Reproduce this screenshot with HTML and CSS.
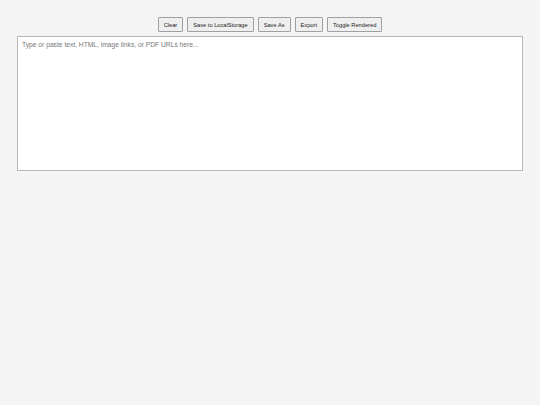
FILE: index.html
```html
<!DOCTYPE html>
<html>
<head>
<meta charset="utf-8">
<link rel="stylesheet" href="styles.css">
</head>
<body>
<div class="toolbar">
  <button class="btn">Clear</button>
  <button class="btn">Save to LocalStorage</button>
  <button class="btn">Save As</button>
  <button class="btn">Export</button>
  <button class="btn">Toggle Rendered</button>
</div>
<textarea class="editor" placeholder="Type or paste text, HTML, image links, or PDF URLs here..."></textarea>
</body>
</html>
```

FILE: styles.css
```css
html, body {
  margin: 0;
  padding: 0;
  background: #f4f4f4;
  font-family: "Liberation Sans", Arial, sans-serif;
}
body {
  padding: 17px 17px 0 17px;
}
.toolbar {
  display: flex;
  justify-content: center;
  gap: 4px;
  height: 15px;
  margin-bottom: 4px;
}
.btn {
  font-family: "Liberation Sans", Arial, sans-serif;
  font-size: 5.7px;
  color: #222;
  background: #efefef;
  border: 1px solid #a0a0a0;
  border-radius: 1px;
  padding: 0 5px;
  height: 15px;
  margin: 0;
}
.editor {
  display: block;
  box-sizing: border-box;
  width: 506px;
  height: 135px;
  margin: 0;
  padding: 4px 4px;
  border: 1px solid #b8b8b8;
  background: #fff;
  font-family: "Liberation Sans", Arial, sans-serif;
  font-size: 6.7px;
  resize: none;
}
.editor::placeholder {
  color: #777;
}
```
